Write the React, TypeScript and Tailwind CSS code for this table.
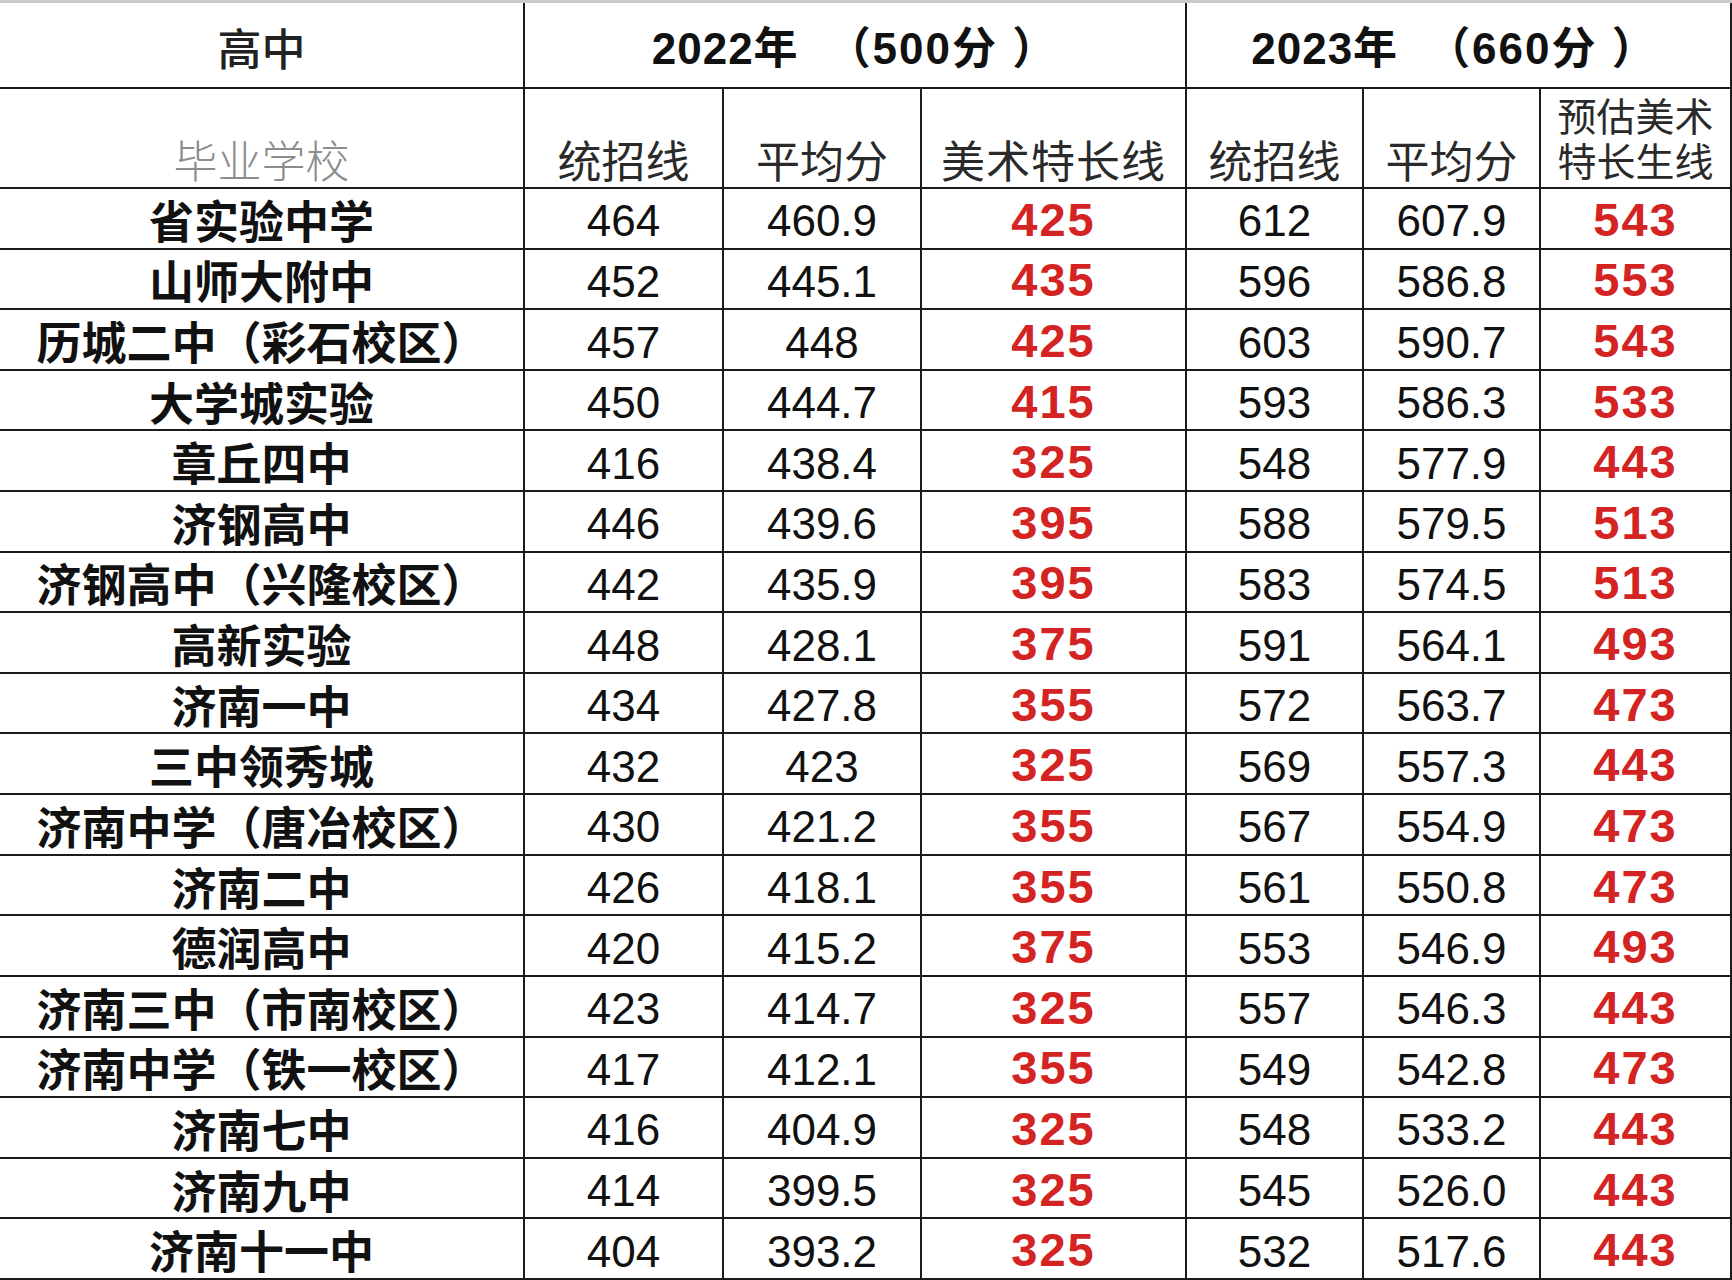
const rows: [string, string, string, string, string, string, string][] = [
  ["省实验中学", "464", "460.9", "425", "612", "607.9", "543"],
  ["山师大附中", "452", "445.1", "435", "596", "586.8", "553"],
  ["历城二中（彩石校区）", "457", "448", "425", "603", "590.7", "543"],
  ["大学城实验", "450", "444.7", "415", "593", "586.3", "533"],
  ["章丘四中", "416", "438.4", "325", "548", "577.9", "443"],
  ["济钢高中", "446", "439.6", "395", "588", "579.5", "513"],
  ["济钢高中（兴隆校区）", "442", "435.9", "395", "583", "574.5", "513"],
  ["高新实验", "448", "428.1", "375", "591", "564.1", "493"],
  ["济南一中", "434", "427.8", "355", "572", "563.7", "473"],
  ["三中领秀城", "432", "423", "325", "569", "557.3", "443"],
  ["济南中学（唐冶校区）", "430", "421.2", "355", "567", "554.9", "473"],
  ["济南二中", "426", "418.1", "355", "561", "550.8", "473"],
  ["德润高中", "420", "415.2", "375", "553", "546.9", "493"],
  ["济南三中（市南校区）", "423", "414.7", "325", "557", "546.3", "443"],
  ["济南中学（铁一校区）", "417", "412.1", "355", "549", "542.8", "473"],
  ["济南七中", "416", "404.9", "325", "548", "533.2", "443"],
  ["济南九中", "414", "399.5", "325", "545", "526.0", "443"],
  ["济南十一中", "404", "393.2", "325", "532", "517.6", "443"],
];

const cols = "grid grid-cols-[525px_199px_198px_265px_177px_177px_191px]";
const line = "border-[#1c1c1c]";

export default function App() {
  return (
    <div
      className="flex h-[1280px] w-[1732px] flex-col overflow-hidden bg-white text-[#111]"
      style={{ fontFamily: '"Liberation Sans", "Noto Sans CJK SC", sans-serif' }}
    >
      {/* top header */}
      <div className={`grid h-[89px] shrink-0 grid-cols-[525px_662px_545px] border-t-[3px] border-t-[#c9c9c9] border-b-2 ${line}`}>
        <div className={`flex items-center justify-center border-r-2 ${line} pt-3 text-[44px] font-medium text-[#222]`}>
          高中
        </div>
        <div className={`flex items-center justify-center border-r-2 ${line} pt-2 text-[44px] font-bold`}>
          <span className="tracking-[1px]">2022年</span>
          <span className="ml-7 tracking-[2px]">（500分 ）</span>
        </div>
        <div className={`flex items-center justify-center border-r-2 ${line} pt-2 pr-2 text-[44px] font-bold`}>
          <span className="tracking-[1px]">2023年</span>
          <span className="ml-7 tracking-[2px]">（660分 ）</span>
        </div>
      </div>

      {/* sub header */}
      <div className={`${cols} h-[100px] shrink-0 border-b-2 ${line} text-[44px] leading-none text-[#2a2a2a]`}>
        <div className={`flex items-end justify-center border-r-2 ${line} pb-0.5 font-light text-[#8c8c8c]`}>
          毕业学校
        </div>
        <div className={`flex items-end justify-center border-r-2 ${line} pb-0.5`}>统招线</div>
        <div className={`flex items-end justify-center border-r-2 ${line} pb-0.5`}>平均分</div>
        <div className={`flex items-end justify-center border-r-2 ${line} pb-0.5 tracking-[1px]`}>美术特长线</div>
        <div className={`flex items-end justify-center border-r-2 ${line} pb-0.5`}>统招线</div>
        <div className={`flex items-end justify-center border-r-2 ${line} pb-0.5`}>平均分</div>
        <div className={`flex flex-col items-center justify-end border-r-2 ${line} pb-0.5 text-[39px] leading-[45px]`}>
          <span>预估美术</span>
          <span>特长生线</span>
        </div>
      </div>

      {/* data rows */}
      <div className="grid min-h-0 flex-1 grid-rows-[repeat(18,minmax(0,1fr))]">
        {rows.map((r) => (
          <div key={r[0]} className={`${cols} min-h-0 overflow-hidden border-b-2 ${line}`}>
            <div className={`flex items-center justify-center border-r-2 ${line} pt-2.5 text-[45px] font-bold leading-none`}>
              {r[0]}
            </div>
            {r.slice(1).map((v, i) => {
              const red = i === 2 || i === 5;
              return (
                <div
                  key={i}
                  className={`flex items-center justify-center border-r-2 ${line} leading-none ${
                    red
                      ? "pt-0.5 text-[47px] font-bold tracking-[2px] text-[#d32323]"
                      : "pt-1.5 text-[44px] text-[#111]"
                  }`}
                >
                  {v}
                </div>
              );
            })}
          </div>
        ))}
      </div>
    </div>
  );
}
